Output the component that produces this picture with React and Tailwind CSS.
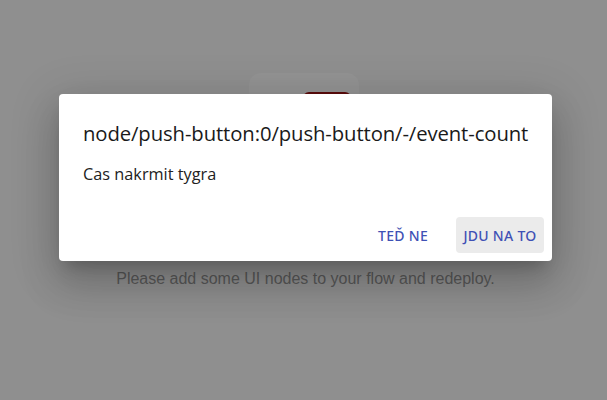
import React from 'react';

const App = () => {
    return (
        <div className="relative w-full h-[400px] overflow-hidden bg-[#8f8f8f] font-['Liberation_Sans',Arial,sans-serif]">
            {/* Page behind the overlay */}
            <div className="flex flex-col items-center pt-[73px]">
                <div className="w-[110px] h-[120px] rounded-[12px] bg-[#939393] flex justify-center pt-[19px] pl-[46px]">
                    <div className="w-[48px] h-[40px] rounded-t-[6px] bg-[#5c0c0c]" />
                </div>
                <p className="mt-[74px] text-[16px] text-[#585858] pl-[4px]">Please add some UI nodes to your flow and redeploy.</p>
            </div>

            {/* Dialog */}
            <div className="absolute left-[59px] top-[94px] w-[493px] h-[167px] rounded-[4px] bg-white flex flex-col shadow-[0_11px_15px_-7px_rgba(0,0,0,0.2),0_24px_38px_3px_rgba(0,0,0,0.14),0_9px_46px_8px_rgba(0,0,0,0.12)] font-['Open_Sans','Noto_Sans',sans-serif]">
                <h2 className="px-[24px] pt-[24px] text-[20.3px] leading-[30px] font-medium text-[#1a1a1a] tracking-[-0.1px] whitespace-nowrap">
                    node/push-button:0/push-button/-/event-count
                </h2>
                <p className="px-[24px] mt-[14px] text-[16.3px] leading-[24px] text-[#222]">Cas nakrmit tygra</p>
                <div className="mt-auto flex justify-end items-center gap-[20px] p-[8px] font-['Noto_Sans',sans-serif]">
                    <button className="h-[36px] px-[8px] min-w-[64px] rounded-[4px] text-[14px] font-medium tracking-[0.3px] text-[#3f51b5]">TEĎ NE</button>
                    <button className="h-[36px] w-[88px] rounded-[4px] bg-[#ebebeb] text-[14px] font-medium tracking-[0.3px] text-[#3f51b5]">JDU NA TO</button>
                </div>
            </div>
        </div>
    );
};

export default App;
